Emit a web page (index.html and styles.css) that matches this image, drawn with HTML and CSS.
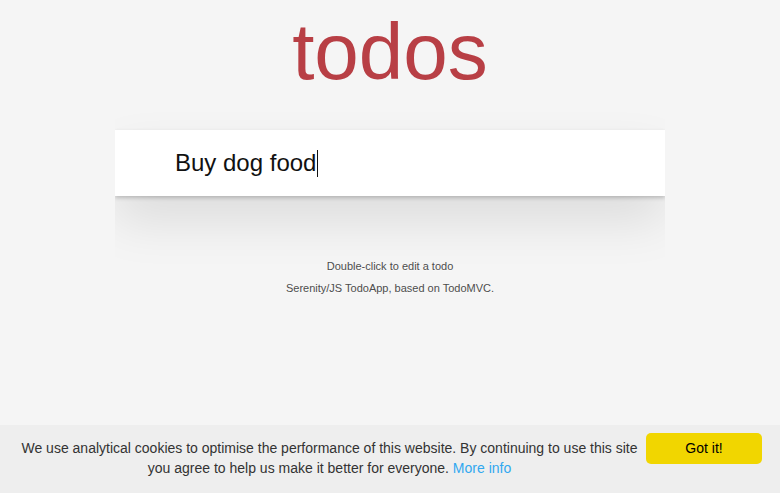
FILE: index.html
```html
<!DOCTYPE html>
<html>
<head>
<meta charset="utf-8">
<link rel="stylesheet" href="styles.css">
</head>
<body>
<section class="todoapp">
  <header class="header">
    <h1 class="title">todos</h1>
    <div class="new-todo"><span class="typed">Buy dog food</span><span class="caret"></span></div>
  </header>
</section>
<footer class="info">
  <p>Double-click to edit a todo</p>
  <p>Serenity/JS TodoApp, based on TodoMVC.</p>
</footer>
<div class="cookie-bar">
  <span class="cookie-msg">We use analytical cookies to optimise the performance of this website. By continuing to use this site you agree to help us make it better for everyone. <a class="cookie-link">More info</a></span>
  <a class="cookie-btn">Got it!</a>
</div>
</body>
</html>
```
FILE: styles.css
```css
html { margin: 0; padding: 0; height: 493px; overflow: hidden; background: #f5f5f5; }
body {
  font: 14px "Liberation Sans", Arial, sans-serif;
  line-height: 1.4em;
  color: #111;
  max-width: 550px;
  margin: 0 auto;
  padding: 0;
}
.todoapp {
  background: #fff;
  margin: 130px 0 40px 0;
  position: relative;
  box-shadow: 0 2px 4px 0 rgba(0,0,0,0.2), 0 25px 50px 0 rgba(0,0,0,0.1);
}
.title {
  position: absolute;
  top: -134px;
  width: 100%;
  margin: 0;
  font-size: 80px;
  font-weight: 200;
  line-height: 1.4em;
  text-align: center;
  color: #b83f45;
}
.new-todo {
  box-sizing: border-box;
  height: 66px;
  padding: 16px 16px 16px 60px;
  font-size: 24px;
  line-height: 1.4em;
  color: #111;
  display: flex;
  align-items: center;
}
.caret {
  display: inline-block;
  width: 1px;
  height: 27px;
  background: #111;
  margin-left: 1px;
}
.info {
  margin: 65px auto 0;
  color: #4d4d4d;
  font-size: 11px;
  text-shadow: 0 1px 0 rgba(255,255,255,0.5);
  text-align: center;
}
.info p { margin: 0; line-height: 1; padding: 0; }
.info p + p { margin-top: 11px; }
.cookie-bar {
  position: fixed;
  left: 0; right: 0; bottom: 0;
  height: 68px;
  box-sizing: border-box;
  background: #eee;
  color: #333;
  font-size: 14px;
  line-height: 20px;
  display: flex;
  align-items: flex-start;
  padding: 13px 18px 0 16px;
}
.cookie-msg {
  flex: 1;
  text-align: center;
}
.cookie-link { color: #31a8f0; }
.cookie-btn {
  flex: none;
  width: 116px;
  height: 31px;
  margin-top: -5px;
  margin-left: 3px;
  background: #f1d600;
  border-radius: 5px;
  color: #000;
  text-align: center;
  line-height: 31px;
  font-size: 14px;
}
```
